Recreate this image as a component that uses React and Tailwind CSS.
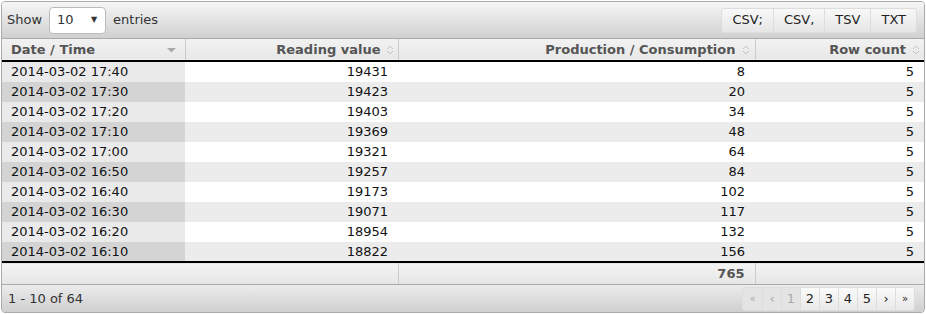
import { useState } from 'react';

const rows = [
  ['2014-03-02 17:40', 19431, 8, 5],
  ['2014-03-02 17:30', 19423, 20, 5],
  ['2014-03-02 17:20', 19403, 34, 5],
  ['2014-03-02 17:10', 19369, 48, 5],
  ['2014-03-02 17:00', 19321, 64, 5],
  ['2014-03-02 16:50', 19257, 84, 5],
  ['2014-03-02 16:40', 19173, 102, 5],
  ['2014-03-02 16:30', 19071, 117, 5],
  ['2014-03-02 16:20', 18954, 132, 5],
  ['2014-03-02 16:10', 18822, 156, 5],
];

function SortBoth() {
  return (
    <svg width="8" height="10" viewBox="0 0 8 10" className="shrink-0">
      <path d="M1 4 L4 1 L7 4" fill="none" stroke="#c4c4c4" strokeWidth="1" />
      <path d="M1 6 L4 9 L7 6" fill="none" stroke="#c4c4c4" strokeWidth="1" />
    </svg>
  );
}

function SortDesc() {
  return (
    <svg width="9" height="6" viewBox="0 0 9 6" className="shrink-0">
      <path d="M0 1 H9 L4.5 5.5 Z" fill="#a8a8a8" />
    </svg>
  );
}

export default function App() {
  const [len] = useState('10');
  const total = rows.reduce((t, r) => t + r[2], 0);

  return (
    <div className="w-[926px] h-[314px] bg-white p-px text-[13px] text-[#111]" style={{ fontFamily: '"DejaVu Sans", Verdana, sans-serif' }}>
      <div className="h-full border border-[#aaa] rounded-[4px] overflow-hidden flex flex-col">
        {/* top toolbar */}
        <div className="h-[37px] flex items-center justify-between px-[5px] bg-gradient-to-b from-[#f6f6f6] to-[#d0d0d0] border-b border-[#aaa]">
          <div className="flex items-center gap-[7px] text-[#333]">
            <span>Show</span>
            <div className="w-[57px] h-[27px] bg-white border border-[#bbb] rounded-[4px] flex items-center justify-between pl-[7px] pr-[8px]">
              <span>{len}</span>
              <span className="text-[8px]">▼</span>
            </div>
            <span>entries</span>
          </div>
          <div className="flex h-[25px] mr-[2px] border border-[#ddd] rounded-[3px] overflow-hidden bg-gradient-to-b from-[#f8f8f8] to-[#e6e6e6]">
            {['CSV;', 'CSV,', 'TSV', 'TXT'].map((b, i) => (
              <button key={b} className={`px-[10px] text-[#222] ${i > 0 ? 'border-l border-[#ddd]' : ''}`}>{b}</button>
            ))}
          </div>
        </div>

        <table className="w-full border-collapse">
          <thead>
            <tr className="h-[22px] bg-gradient-to-b from-[#f2f2f2] to-[#e8e8e8] text-[#555] border-b-2 border-black">
              <th className="w-[183px] px-[9px] font-bold text-left border-r border-[#ccc]">
                <div className="flex items-center justify-between"><span>Date / Time</span><SortDesc /></div>
              </th>
              <th className="w-[213px] pl-[9px] pr-[4px] font-bold text-right border-r border-[#ccc]">
                <div className="flex items-center justify-end gap-[5px]"><span>Reading value</span><SortBoth /></div>
              </th>
              <th className="w-[357px] pl-[9px] pr-[5px] font-bold text-right border-r border-[#ccc]">
                <div className="flex items-center justify-end gap-[6px]"><span>Production / Consumption</span><SortBoth /></div>
              </th>
              <th className="pl-[9px] pr-[4px] font-bold text-right">
                <div className="flex items-center justify-end gap-[6px]"><span>Row count</span><SortBoth /></div>
              </th>
            </tr>
          </thead>
          <tbody>
            {rows.map((r, i) => (
              <tr key={r[0]} className={`h-[20px] ${i % 2 ? 'bg-[#ececec]' : 'bg-white'}`}>
                <td className={`px-[9px] ${i % 2 ? 'bg-[#d4d4d4]' : 'bg-[#eaeaea]'}`}>{r[0]}</td>
                <td className="px-[10px] text-right">{r[1]}</td>
                <td className="px-[10px] text-right">{r[2]}</td>
                <td className="px-[10px] text-right">{r[3]}</td>
              </tr>
            ))}
          </tbody>
          <tfoot>
            <tr className="h-[22px] bg-gradient-to-b from-[#f4f4f4] to-[#e6e6e6] border-t-2 border-black text-[#555] font-bold">
              <td></td>
              <td className="border-r border-[#ccc]"></td>
              <td className="px-[10px] text-right border-r border-[#ccc]">{total}</td>
              <td></td>
            </tr>
          </tfoot>
        </table>

        {/* bottom toolbar */}
        <div className="flex-1 flex items-center justify-between pl-[6px] pr-[9px] bg-gradient-to-b from-[#ececec] to-[#cfcfcf] border-t border-[#aaa]">
          <span className="text-[#333]">1 - 10 of 64</span>
          <div className="flex h-[24px] border border-[#ddd] rounded-[3px] overflow-hidden text-[13px]">
            {[
              ['«', false, 'text-[10px]'],
              ['‹', false, ''],
              ['1', false, ''],
              ['2', true, ''],
              ['3', true, ''],
              ['4', true, ''],
              ['5', true, ''],
              ['›', true, ''],
              ['»', true, 'text-[10px]'],
            ].map(([t, on, sz], i) => (
              <span
                key={i}
                className={`flex items-center justify-center min-w-[19px] px-[4px] ${i > 0 ? 'border-l border-[#ddd]' : ''} ${on ? 'bg-gradient-to-b from-[#fafafa] to-[#e9e9e9] text-[#222]' : 'bg-[#e4e4e4] text-[#aaa]'} ${sz}`}
              >
                {t}
              </span>
            ))}
          </div>
        </div>
      </div>
    </div>
  );
}
